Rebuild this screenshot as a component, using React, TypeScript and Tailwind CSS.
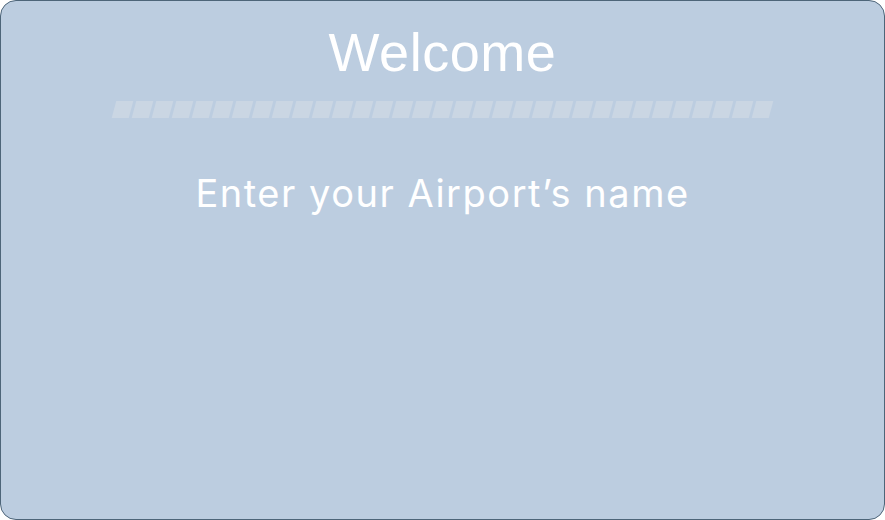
const stripes = Array.from({ length: 33 })

export default function App() {
  return (
    <div className="w-[885px] h-[520px] bg-white">
      <div className="w-full h-full rounded-2xl border border-[#4d6579] bg-[#bccde0] flex flex-col items-center">
        <h1 className="mt-[19px] text-[54px] leading-[64px] tracking-[0.01em] text-white font-['Liberation_Sans',Arial,sans-serif]">
          Welcome
        </h1>
        <div className="mt-[17px] flex gap-[3px]">
          {stripes.map((_, i) => (
            <div key={i} className="w-[17px] h-[17px] -skew-x-[15deg] bg-[#cad6e3]" />
          ))}
        </div>
        <p className="mt-[52px] text-[38px] leading-[46px] tracking-[0.04em] text-white font-['Inter',sans-serif]">
          Enter your Airport’s name
        </p>
      </div>
    </div>
  )
}
